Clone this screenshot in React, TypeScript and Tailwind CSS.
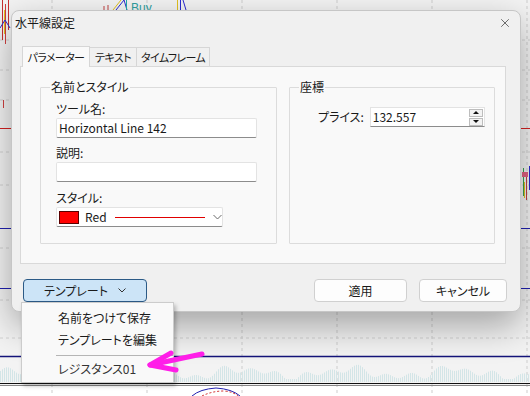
import { X } from "lucide-react";

const GRID_X = [52, 147, 242, 337, 432, 527];
const GRID_Y = [40, 70, 100, 152, 185, 248, 300, 338];

// histogram bars under the navy line
const BARS = Array.from({ length: 265 }, (_, i) => {
  const x = i * 2;
  const h = 9 + 4 * Math.sin(x / 17) + 3 * Math.sin(x / 4.3) + 2 * Math.cos(x / 7.1);
  return { x, h: Math.max(3, h) };
});

function Chart() {
  return (
    <svg className="absolute inset-0" width={530} height={396} viewBox="0 0 530 396">
      <rect x={0} y={0} width={530} height={386} fill="#f3f3f3" />
      <rect x={0} y={386} width={530} height={10} fill="#ffffff" />
      {GRID_X.map((x) => (
        <line key={x} x1={x} y1={0} x2={x} y2={396} stroke="#cdcdcd" strokeDasharray="3 3" />
      ))}
      {GRID_Y.map((y) => (
        <line key={y} x1={0} y1={y} x2={530} y2={y} stroke="#d2d2d2" strokeDasharray="3 3" />
      ))}
      {BARS.map((b) => (
        <line key={b.x} x1={b.x + 0.5} y1={382} x2={b.x + 0.5} y2={382 - b.h} stroke="#d3e5e7" />
      ))}
      <line x1={0} y1={128.5} x2={530} y2={128.5} stroke="#d42020" />
      <line x1={0} y1={228.5} x2={530} y2={228.5} stroke="#2020b0" />
      <line x1={0} y1={288.5} x2={530} y2={288.5} stroke="#2020b0" />
      <line x1={0} y1={356.5} x2={530} y2={356.5} stroke="#14147a" strokeWidth={1.3} />
      <line x1={0} y1={383.5} x2={530} y2={383.5} stroke="#111" />
      <line x1={0} y1={385.5} x2={530} y2={385.5} stroke="#888" />
      {/* candles top-left */}
      <line x1={2.5} y1={0} x2={2.5} y2={40} stroke="#c83030" />
      <line x1={5.5} y1={4} x2={5.5} y2={44} stroke="#d04040" />
      <line x1={8.5} y1={0} x2={8.5} y2={30} stroke="#c83030" />
      <line x1={4.5} y1={10} x2={4.5} y2={34} stroke="#e0c020" />
      <polyline points="0,28 5,20 10,28" fill="none" stroke="#2a2ad0" />
      <line x1={3.5} y1={100} x2={3.5} y2={108} stroke="#d04040" />
      {/* top middle */}
      <line x1={104} y1={10} x2={104} y2={6} stroke="#c04040" />
      <line x1={108} y1={10} x2={108} y2={5} stroke="#c04040" />
      <polyline points="113,10 121,0" fill="none" stroke="#e0c020" />
      <polyline points="116,10 124,0 127,10" fill="none" stroke="#2a2ad0" />
      <line x1={126.5} y1={0} x2={126.5} y2={10} stroke="#2aa" />
      <text x={131} y={12} fontSize={12} fill="#30a0a0" fontFamily="Liberation Sans, sans-serif">
        Buy
      </text>
      <line x1={177.5} y1={0} x2={177.5} y2={10} stroke="#e0c020" />
      <line x1={180.5} y1={0} x2={180.5} y2={10} stroke="#2a2ad0" />
      <line x1={183} y1={0} x2={186} y2={10} stroke="#2a2ad0" />
      {/* right strip candles */}
      <line x1={523.5} y1={168} x2={523.5} y2={196} stroke="#3aa050" />
      <line x1={526.5} y1={172} x2={526.5} y2={200} stroke="#c04040" />
      <line x1={529.5} y1={166} x2={529.5} y2={190} stroke="#2a2ad0" />
      <rect x={522} y={172} width={6} height={5} fill="#e06080" />
      <line x1={524.5} y1={182} x2={524.5} y2={198} stroke="#e0c020" />
      {/* bottom circle */}
      <path d="M192,396 Q200,389 216,388 Q232,389 240,396" fill="none" stroke="#2020b0" />
      <path d="M202,396 Q212,391 224,391 Q234,392 238,396" fill="none" stroke="#d02020" strokeDasharray="2 2" />
    </svg>
  );
}

function Field({ children, w = "w-[201px]" }: { children?: React.ReactNode; w?: string }) {
  return (
    <div
      className={`${w} h-[20px] bg-white border border-[#e3e3e3] border-b-[#8c8c8c] rounded-[2px] flex items-center pl-[2px] text-[12px] text-[#1a1a1a]`}
    >
      {children}
    </div>
  );
}

function Group({ title, w, children }: { title: string; w: string; children: React.ReactNode }) {
  return (
    <div className={`relative ${w} h-[157px] border border-[#dcdcdc] rounded-[1px]`}>
      <span className="absolute left-[9px] top-[-9px] px-[1px] bg-[#f9f9f9] text-[12px] leading-[16px] text-[#1a1a1a] whitespace-nowrap">
        {title}
      </span>
      {children}
    </div>
  );
}

export default function App() {
  return (
    <div className="relative w-[530px] h-[396px] overflow-hidden bg-[#f3f3f3] font-['Noto_Sans_CJK_JP','Noto_Sans',sans-serif] [font-feature-settings:'palt'] text-[#1a1a1a]">
      <Chart />

      {/* dialog window */}
      <div className="absolute left-[11px] top-[10px] w-[510px] h-[302px] rounded-[8px] border border-[#c6c6c6] bg-[#f0f0f0] shadow-[0_14px_36px_rgba(0,0,0,0.33)] flex flex-col">
        <div className="h-[24px] flex items-center justify-between pl-[3px] pr-[8px]">
          <span className="text-[12px] leading-[16px]">水平線設定</span>
          <X className="w-[14px] h-[14px] text-[#222]" strokeWidth={1.1} />
        </div>

        <div className="mt-[10px] ml-[8px] w-[486px]">
          <div className="flex items-end h-[21px] pl-[2px] text-[11px] tracking-[-0.6px] whitespace-nowrap">
            <div className="h-[21px] w-[68px] bg-[#f9f9f9] border border-b-0 border-[#d6d6d6] flex items-center justify-center relative top-[1px]">
              パラメーター
            </div>
            <div className="h-[19px] w-[47px] bg-[#f0f0f0] border border-l-0 border-b-0 border-[#d6d6d6] flex items-center justify-center">
              テキスト
            </div>
            <div className="h-[19px] w-[73px] bg-[#f0f0f0] border border-l-0 border-b-0 border-[#d6d6d6] flex items-center justify-center">
              タイムフレーム
            </div>
          </div>

          <div className="h-[198px] bg-[#f9f9f9] border border-[#d9d9d9] flex gap-[12px] pt-[20px] pl-[19px]">
            <Group title="名前とスタイル" w="w-[237px]">
              <div className="flex flex-col pl-[15px] pt-[13px] text-[12px] leading-[16px]">
                <span>ツール名:</span>
                <div className="mt-[1px]">
                  <Field>Horizontal Line 142</Field>
                </div>
                <span className="mt-[7px]">説明:</span>
                <div className="mt-[1px]">
                  <Field />
                </div>
                <span className="mt-[8px]">スタイル:</span>
                <div className="mt-[1px] w-[167px] h-[20px] bg-white border border-[#e3e3e3] border-b-[#8c8c8c] rounded-[2px] flex items-center pl-[2px]">
                  <div className="w-[20px] h-[13px] bg-[#ff0000] border border-[#5a0000]" />
                  <span className="ml-[6px] text-[12px] leading-[14px]">Red</span>
                  <svg className="ml-[8px]" width="90" height="3" viewBox="0 0 90 3">
                    <line x1={0} y1={1.5} x2={90} y2={1.5} stroke="#e00000" strokeWidth={1} />
                  </svg>
                  <svg className="ml-[8px]" width="9" height="6" viewBox="0 0 9 6">
                    <polyline points="0.5,1 4.5,5 8.5,1" fill="none" stroke="#6a6a6a" />
                  </svg>
                </div>
              </div>
            </Group>

            <Group title="座標" w="w-[206px]">
              <div className="flex items-center pl-[28px] pt-[19px] gap-[6px] text-[12px] leading-[16px]">
                <span>プライス:</span>
                <div className="w-[115px] h-[20px] bg-white border border-[#e3e3e3] border-b-[#8c8c8c] flex items-center">
                  <span className="pl-[2px] flex-1">132.557</span>
                  <div className="flex flex-col gap-[1px] pr-[1px]">
                    <div className="w-[14px] h-[8px] bg-[#f3f3f3] border border-[#bdbdbd] flex items-center justify-center">
                      <svg width="6" height="3" viewBox="0 0 6 3">
                        <polygon points="0,3 3,0 6,3" fill="#111" />
                      </svg>
                    </div>
                    <div className="w-[14px] h-[8px] bg-[#f3f3f3] border border-[#bdbdbd] flex items-center justify-center">
                      <svg width="6" height="3" viewBox="0 0 6 3">
                        <polygon points="0,0 6,0 3,3" fill="#111" />
                      </svg>
                    </div>
                  </div>
                </div>
              </div>
            </Group>
          </div>
        </div>

        <div className="flex items-center mt-[15px] pl-[11px] pr-[13px]">
          <div className="w-[124px] h-[23px] rounded-[4px] bg-[#cce4f7] border border-[#2b5a86] flex items-center justify-center gap-[10px] text-[12px]">
            <span>テンプレート</span>
            <svg width="8" height="5" viewBox="0 0 8 5">
              <polyline points="0.5,0.5 4,4 7.5,0.5" fill="none" stroke="#333" />
            </svg>
          </div>
          <div className="ml-auto w-[93px] h-[23px] rounded-[4px] bg-[#fdfdfd] border border-[#d0d0d0] flex items-center justify-center text-[12px]">
            適用
          </div>
          <div className="ml-[12px] w-[88px] h-[23px] rounded-[4px] bg-[#fdfdfd] border border-[#d0d0d0] flex items-center justify-center text-[12px]">
            キャンセル
          </div>
        </div>
      </div>

      {/* template dropdown menu */}
      <div className="absolute left-[21px] top-[302px] w-[153px] h-[81px] bg-[#f9f9f9] border border-[#cccccc] shadow-[2px_3px_4px_rgba(0,0,0,0.25)] flex flex-col pt-[4px] text-[12px]">
        <div className="h-[22px] flex items-center pl-[36px]">名前をつけて保存</div>
        <div className="h-[22px] flex items-center pl-[36px]">テンプレートを編集</div>
        <div className="mt-[4px] ml-[34px] h-[1px] bg-[#b5b5b5]" />
        <div className="mt-[2px] h-[22px] flex items-center pl-[36px] text-[#333]">レジスタンス01</div>
      </div>

      {/* annotation arrow */}
      <svg className="absolute inset-0 pointer-events-none" width={530} height={396} viewBox="0 0 530 396">
        <g fill="none" stroke="#ff1ee8" strokeWidth={5} strokeLinecap="round" strokeLinejoin="round">
          <line x1={202} y1={354} x2={150} y2={365} />
          <polyline points="171,353 150,365 176,370" />
        </g>
      </svg>
    </div>
  );
}
